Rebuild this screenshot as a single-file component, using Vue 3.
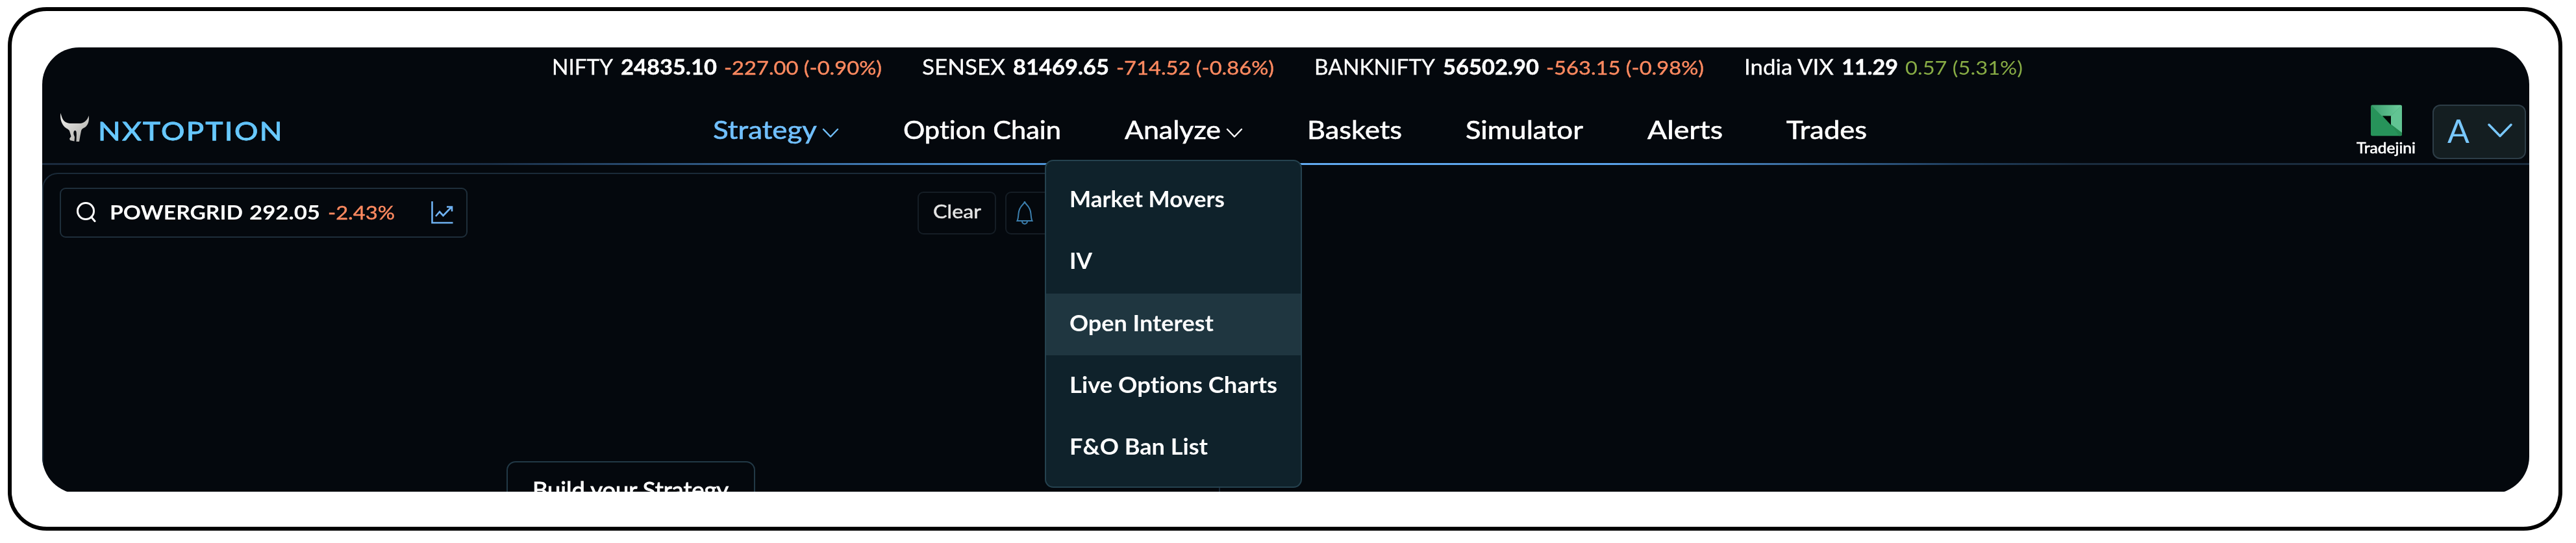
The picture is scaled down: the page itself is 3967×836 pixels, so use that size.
<template>
  <div class="page">
    <div class="frame">
      <div class="clip">
        <div class="shell">
          <div class="ticker">
            <div v-for="t in tickers" :key="t.name" class="tick">
              <span v-fit="t.widths[0]">{{ t.name }}</span>
              <b v-fit="t.widths[1]">{{ t.value }}</b>
              <span v-fit="t.widths[2]" :class="['change', t.up ? 'up' : 'down']">{{ t.change }}</span>
            </div>
          </div>

          <header class="navbar">
            <div class="brand">
              <svg class="bull" viewBox="0 0 45 45">
                <defs>
                  <linearGradient id="bullFill" x1="0" y1="0" x2="1" y2="1">
                    <stop offset="0" stop-color="#f2f1ee" />
                    <stop offset="1" stop-color="#aaa9a5" />
                  </linearGradient>
                </defs>
                <path fill="url(#bullFill)" d="M0.500 0C2 7 4 12 9 14.500C12 16 14 16 17 16H28C32 16 35 15.500 38 13C41 10.500 42.500 8 43.500 4C45 12 42.500 20 36 23C34 24 32.500 25 32 27.500L30.500 35L29 44H24.500L24.800 35C25 29 24.500 27 22.500 27C20.500 27 20 30 20.500 33L22 37L21.500 43.500L15 42L14 39.500L16.500 36L14 27.500C12.500 24.500 9 24 6.500 21.500C1.500 16 -1 8 0.500 0Z" />
              </svg>
              <span class="brand-name" v-fit="286">NXTOPTION</span>
            </div>
            <nav class="links">
              <a v-for="l in links" :key="l.label" :class="['link', { active: l.active }]">
                <span v-fit="l.width">{{ l.label }}</span>
                <svg v-if="l.caret" class="caret" viewBox="0 0 26 16"><path d="M2 2L13 13.500L24 2" /></svg>
              </a>
            </nav>
            <div class="account">
              <div class="broker">
                <svg class="broker-logo" viewBox="0 0 48 48">
                  <defs>
                    <linearGradient id="brokerTop" x1="0" y1="0" x2="1" y2="0">
                      <stop offset="0" stop-color="#3a9d6c" />
                      <stop offset="1" stop-color="#6fcf9f" />
                    </linearGradient>
                    <clipPath id="brokerClip"><rect width="48" height="48" rx="3" /></clipPath>
                  </defs>
                  <g clip-path="url(#brokerClip)">
                    <rect width="48" height="48" fill="#27935a" />
                    <path d="M0 0H48L31 17H17Z" fill="url(#brokerTop)" />
                    <path d="M48 0V43L31 30V17Z" fill="#62c493" />
                    <path d="M31 30L48 43V48H44Z" fill="#258a52" />
                    <path d="M18 17H31V31Z" fill="#020806" />
                  </g>
                </svg>
                <span class="broker-name" v-fit="91">Tradejini</span>
              </div>
              <button class="user">
                <span class="avatar">A</span>
                <svg class="user-caret" viewBox="0 0 38 22"><path d="M2 2L19 19.500L36 2" /></svg>
              </button>
            </div>
          </header>
          <div class="rule"></div>

          <main class="builder">
            <div class="toolbar">
              <div class="search">
                <svg class="search-icon" viewBox="0 0 31 33"><circle cx="15" cy="15" r="12.500" /><path d="M23.500 24L29 30.500" /></svg>
                <span class="symbol" v-fit="205">POWERGRID</span>
                <span class="price" v-fit="109">292.05</span>
                <span class="change down" v-fit="103">-2.43%</span>
                <svg class="chart-icon" viewBox="0 0 34 35">
                  <path d="M1.500 0V33H33.500" />
                  <path d="M7 23L13 16L18.500 22L31 9M24 8.500H32V15.500" />
                </svg>
              </div>
              <button class="clear"><span v-fit="74">Clear</span></button>
              <button class="bell">
                <svg viewBox="0 0 26 37">
                  <path d="M13 1C13 3 14 4 16 6C20 10 22 14 22.500 20C23 25 23 28 24.500 31H1.500C3 28 3 25 3.500 20C4 14 6 10 10 6C12 4 13 3 13 1Z" />
                  <path d="M9 31.500C9 37 17 37 17 31.500" />
                </svg>
              </button>
            </div>
            <div class="build"><span v-fit="302">Build your Strategy</span></div>
          </main>

          <div class="menu">
            <div v-for="m in menu" :key="m.label" :class="['menu-item', { hover: m.label === hovered }]">
              <span v-fit="m.width">{{ m.label }}</span>
            </div>
          </div>
        </div>
      </div>
    </div>
  </div>
</template>

<script setup>
import { ref } from 'vue'

const hovered = ref('Open Interest')

const tickers = [
  { name: 'NIFTY', value: '24835.10', change: '-227.00 (-0.90%)', widths: [94, 148, 243] },
  { name: 'SENSEX', value: '81469.65', change: '-714.52 (-0.86%)', widths: [128, 148, 243] },
  { name: 'BANKNIFTY', value: '56502.90', change: '-563.15 (-0.98%)', widths: [186, 148, 243] },
  { name: 'India VIX', value: '11.29', change: '0.57 (5.31%)', up: true, widths: [138, 87, 181] },
]

const links = [
  { label: 'Strategy', width: 160, active: true, caret: true },
  { label: 'Option Chain', width: 243 },
  { label: 'Analyze', width: 148, caret: true },
  { label: 'Baskets', width: 146 },
  { label: 'Simulator', width: 181 },
  { label: 'Alerts', width: 116 },
  { label: 'Trades', width: 124 },
]

const menu = [
  { label: 'Market Movers', width: 239 },
  { label: 'IV', width: 35 },
  { label: 'Open Interest', width: 222 },
  { label: 'Live Options Charts', width: 320 },
  { label: 'F&O Ban List', width: 213 },
]

// stretch the label so it fills the given width
const vFit = {
  mounted(el, { value }) {
    const natural = el.getBoundingClientRect().width
    el.style.transform = `scaleX(${value / natural})`
    el.style.marginRight = value - natural + 'px'
  },
}
</script>

<style>
body { margin: 0; background: #fff; }
</style>

<style scoped>
.page {
  box-sizing: border-box; width: 3967px; height: 836px;
  padding: 11px 21px 19px 12px;
  font-family: Lato, "Noto Sans", sans-serif; color: #fff;
  font-variant-ligatures: none;
  overflow: hidden;
}
.page span, .page b {
  display: inline-block; flex: none;
  white-space: nowrap; transform-origin: 0 50%;
}
.frame {
  box-sizing: border-box; height: 806px;
  border: 6px solid #000; border-radius: 60px;
  padding: 56px 45px 0 47px;
}
.clip { height: 684px; overflow: hidden; }
.shell {
  position: relative; height: 687px; overflow: hidden;
  border-radius: 57px; background: #04080d;
}
.ticker {
  display: flex; gap: 62px; height: 59px;
  padding-left: 785px; font-size: 32px; line-height: 59px;
}
.tick { display: flex; align-items: baseline; gap: 11.5px; }
.tick span:first-child { -webkit-text-stroke: 0.3px #fff; }
.tick b { font-weight: 700; -webkit-text-stroke: 0.4px #fff; }
.change { font-size: 29px; }
.down { color: #ff8a60; -webkit-text-stroke: 0.4px #ff8a60; }
.up { color: #88ac45; }

.navbar {
  box-sizing: border-box; height: 119px;
  display: flex; align-items: center;
}
.brand {
  box-sizing: border-box; width: 1033px; flex: none;
  display: flex; align-items: center; gap: 13px;
  padding: 10px 0 0 28px;
}
.bull { width: 45px; height: 45px; }
.brand-name {
  font-size: 38px; line-height: 44px; padding-top: 9px; letter-spacing: 2px;
  color: transparent; -webkit-text-stroke: 0.8px #5dc0f8;
  background: linear-gradient(180deg, #58b6f5, #74d4ff);
  -webkit-background-clip: text; background-clip: text;
}
.links { display: flex; gap: 98.5px; padding-top: 15px; }
.link {
  display: flex; align-items: center; gap: 8px;
  font-size: 39px; line-height: 50px;
  -webkit-text-stroke: 0.6px currentColor;
}
.active { color: #71c0ff; }
.caret { width: 26px; height: 16px; margin-top: 12px; }
.caret path, .user-caret path {
  fill: none; stroke: currentColor; stroke-width: 2.4;
  stroke-linecap: round; stroke-linejoin: round;
}
.account { display: flex; align-items: center; gap: 26px; margin-left: auto; padding: 23px 5px 0 0; }
.broker { display: flex; flex-direction: column; align-items: center; }
.broker-logo { width: 48px; height: 49px; margin-top: -2px; }
.broker-name { font-size: 23px; line-height: 34px; -webkit-text-stroke: 0.6px #fff; }
.user {
  box-sizing: border-box; width: 144px; height: 84px;
  display: flex; align-items: center; gap: 28px; padding: 0 0 0 21px;
  background: #141e21; border: 2px solid #2d3d47; border-radius: 12px;
  color: #79c8ff; font-family: inherit;
}
.avatar { width: 34px; font-size: 50px; line-height: 60px; margin-top: -4px; }
.user-caret { width: 38px; height: 22px; flex: none; margin-top: -4px; }
.user-caret path { stroke-width: 3.4; }

.rule {
  height: 3px;
  background: linear-gradient(90deg, #1a2a3d 0%, #1a2e45 18%, #4b8fd2 38%, #62aaf0 50%, #5aa2ea 63%, #1f3d5c 77%, #1a2c3e 82%, #1a2c3e 100%);
}

.builder {
  box-sizing: border-box; width: 1814px; height: 560px;
  margin-top: 12px; padding: 21px 0 0 25px;
  border: 2px solid #1a2a38; border-radius: 24px;
}
.toolbar { display: flex; align-items: center; height: 77px; }
.search {
  box-sizing: border-box; width: 628px; height: 77px;
  display: flex; align-items: baseline;
  padding: 0 20px 0 23px; line-height: 71px;
  border: 2px solid #1e2e3a; border-radius: 9px;
}
.search svg { align-self: center; flex: none; fill: none; }
.search-icon { width: 31px; height: 33px; margin: -2px 21px 0 0; stroke: #fff; stroke-width: 3; stroke-linecap: round; }
.symbol, .price { font-size: 31px; font-weight: 700; }
.price { margin-left: 10px; }
.search .change { margin-left: 12px; }
.chart-icon { width: 34px; height: 35px; margin-left: auto; stroke: #6fb2f2; stroke-width: 2.6; }
.clear, .bell {
  box-sizing: border-box; height: 66px; padding: 0;
  display: flex; align-items: center; justify-content: center;
  background: none; border: 2px solid #151d25; border-radius: 9px;
  font-family: inherit; font-size: 29px; color: #e4e4e4;
}
.clear { width: 121px; margin-left: 693px; }
.clear span { margin-top: -7px; -webkit-text-stroke: 0.5px #e4e4e4; }
.bell { width: 90px; margin-left: 14px; justify-content: flex-start; padding-left: 15px; }
.bell svg { width: 26px; height: 37px; fill: none; stroke: #3c7fae; stroke-width: 2; }
.build {
  box-sizing: border-box; width: 383px; height: 90px;
  margin: 344px 0 0 688px; padding-left: 38px;
  border: 2px solid #223946; border-radius: 14px;
  font-size: 34px; line-height: 84px;
  -webkit-text-stroke: 0.9px #fff;
}

.menu {
  position: absolute; left: 1544px; top: 173px;
  box-sizing: border-box; width: 396px; height: 505px;
  padding-top: 13px; overflow: hidden;
  background: #0f222b; border: 2px solid #25424f; border-radius: 13px;
}
.menu-item {
  box-sizing: border-box; height: 95.3px;
  padding: 0 0 6px 36px;
  font-size: 34px; font-weight: 700; line-height: 90px;
}
.menu-item.hover { background: #1f3640; }
</style>
